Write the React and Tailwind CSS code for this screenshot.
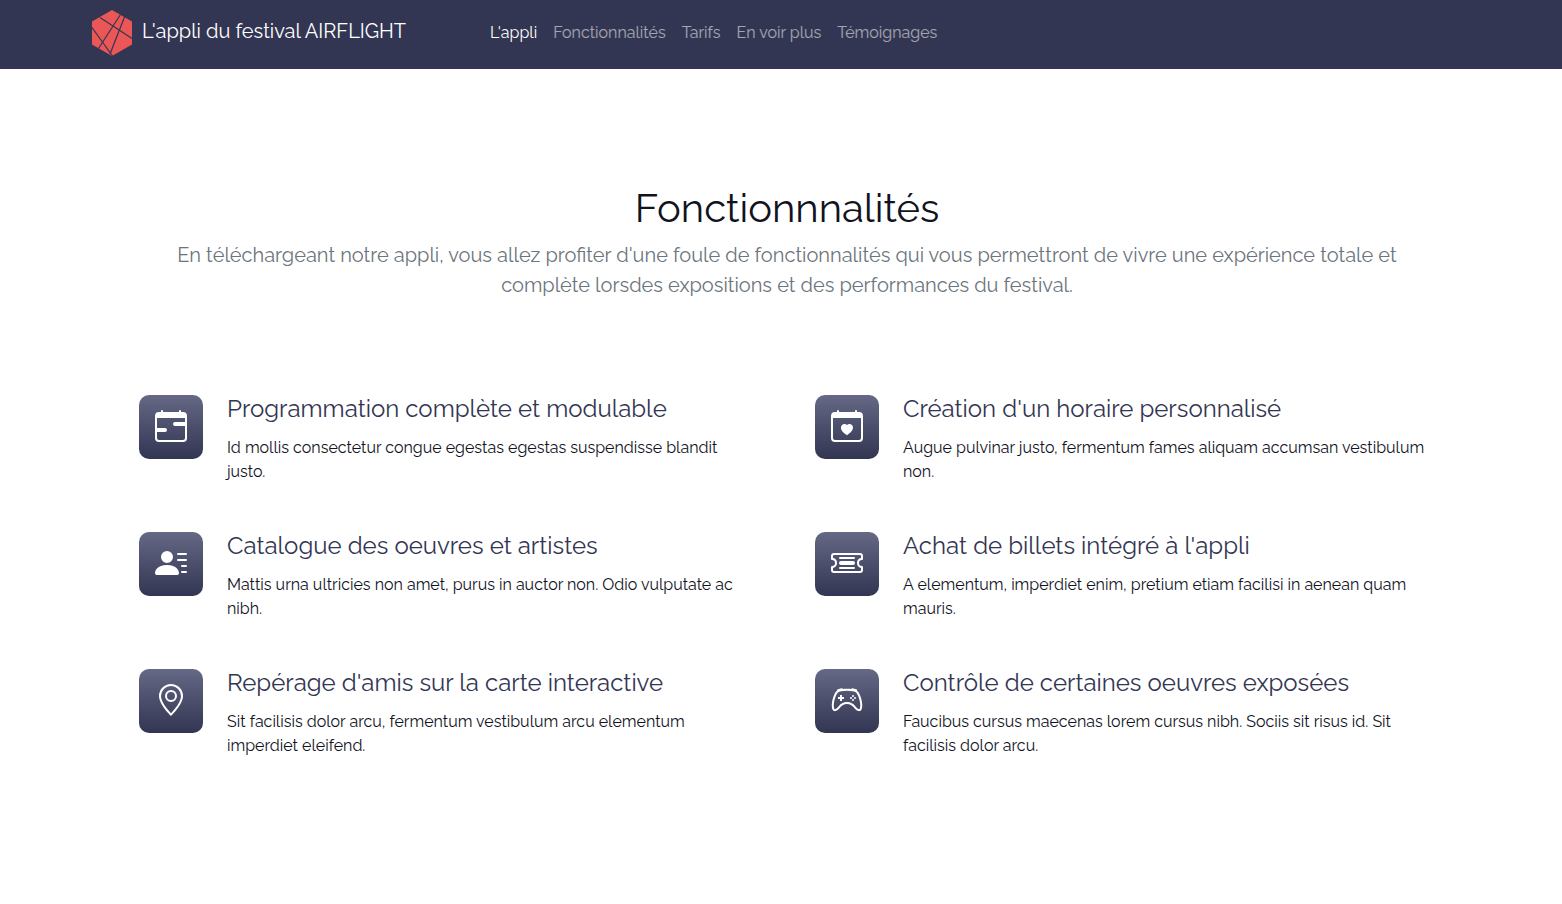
import {
  BsCalendarRange,
  BsCalendarHeart,
  BsPersonLinesFill,
  BsTicketDetailed,
  BsGeoAlt,
  BsController,
} from "react-icons/bs";

const navLinks = [
  { label: "L'appli", active: true },
  { label: "Fonctionnalités" },
  { label: "Tarifs" },
  { label: "En voir plus" },
  { label: "Témoignages" },
];

const features = [
  {
    icon: BsCalendarRange,
    title: "Programmation complète et modulable",
    text: "Id mollis consectetur congue egestas egestas suspendisse blandit justo.",
  },
  {
    icon: BsCalendarHeart,
    title: "Création d'un horaire personnalisé",
    text: "Augue pulvinar justo, fermentum fames aliquam accumsan vestibulum non.",
  },
  {
    icon: BsPersonLinesFill,
    title: "Catalogue des oeuvres et artistes",
    text: "Mattis urna ultricies non amet, purus in auctor non. Odio vulputate ac nibh.",
  },
  {
    icon: BsTicketDetailed,
    title: "Achat de billets intégré à l'appli",
    text: "A elementum, imperdiet enim, pretium etiam facilisi in aenean quam mauris.",
  },
  {
    icon: BsGeoAlt,
    title: "Repérage d'amis sur la carte interactive",
    text: "Sit facilisis dolor arcu, fermentum vestibulum arcu elementum imperdiet eleifend.",
  },
  {
    icon: BsController,
    title: "Contrôle de certaines oeuvres exposées",
    text: "Faucibus cursus maecenas lorem cursus nibh. Sociis sit risus id. Sit facilisis dolor arcu.",
  },
];

function Logo() {
  return (
    <svg viewBox="0 0 40 46" className="h-[46px] w-10 shrink-0" aria-hidden="true">
      <path d="M20 0 40 11.5v23L20 46 0 34.5v-23z" fill="#eb5757" />
      <g stroke="#333652" strokeWidth="1.2" fill="none">
        <path d="M8 7.500 40 28.500" />
        <path d="M28.500 4.500 6.500 38.500" />
        <path d="M32.500 7 18 44" />
        <path d="M0 17.500 20.500 46" />
      </g>
    </svg>
  );
}

function NavBar() {
  return (
    <header className="bg-[#333652] text-white">
      <div className="mx-auto flex h-[69px] max-w-[1402px] items-center px-3 pb-1">
        <a href="#accueil" className="flex w-[398px] shrink-0 items-center gap-2.5 text-xl">
          <Logo />
          <span className="pb-1 whitespace-nowrap">L'appli du festival AIRFLIGHT</span>
        </a>
        <nav className="flex gap-4 text-base">
          {navLinks.map(({ label, active }) => (
            <a
              key={label}
              href="#section"
              className={active ? "text-white" : "text-white/55"}
            >
              {label}
            </a>
          ))}
        </nav>
      </div>
    </header>
  );
}

function Feature({ icon: Icon, title, text }) {
  return (
    <article className="flex gap-6 pr-1">
      <div className="flex size-16 shrink-0 items-center justify-center rounded-[10px] bg-linear-to-b from-[#666985] to-[#333652] pb-0.5 text-white">
        <Icon className="size-8" />
      </div>
      <div>
        <h3 className="mb-[13px] text-2xl leading-7 text-[#333652]">{title}</h3>
        <p className="text-base">{text}</p>
      </div>
    </article>
  );
}

export default function App() {
  return (
    <div className="min-h-screen bg-white font-['Raleway','Open_Sans',sans-serif] text-[#11131e]">
      <NavBar />
      <div className="pl-3">
        <main className="mx-auto max-w-[1320px] px-3 pt-[115px] pb-24">
          <div className="text-center">
            <h2 className="mb-2 text-[40px] leading-12">Fonctionnnalités</h2>
            <p className="text-xl leading-[30px] text-[#6c757d]">
              En téléchargeant notre appli, vous allez profiter d'une foule de fonctionnalités qui
              vous permettront de vivre une expérience totale et complète lorsdes expositions et des
              performances du festival.
            </p>
          </div>
          <section className="mt-[95px] grid gap-x-14 gap-y-12 lg:grid-cols-2">
            {features.map((feature) => (
              <Feature key={feature.title} {...feature} />
            ))}
          </section>
        </main>
      </div>
    </div>
  );
}
